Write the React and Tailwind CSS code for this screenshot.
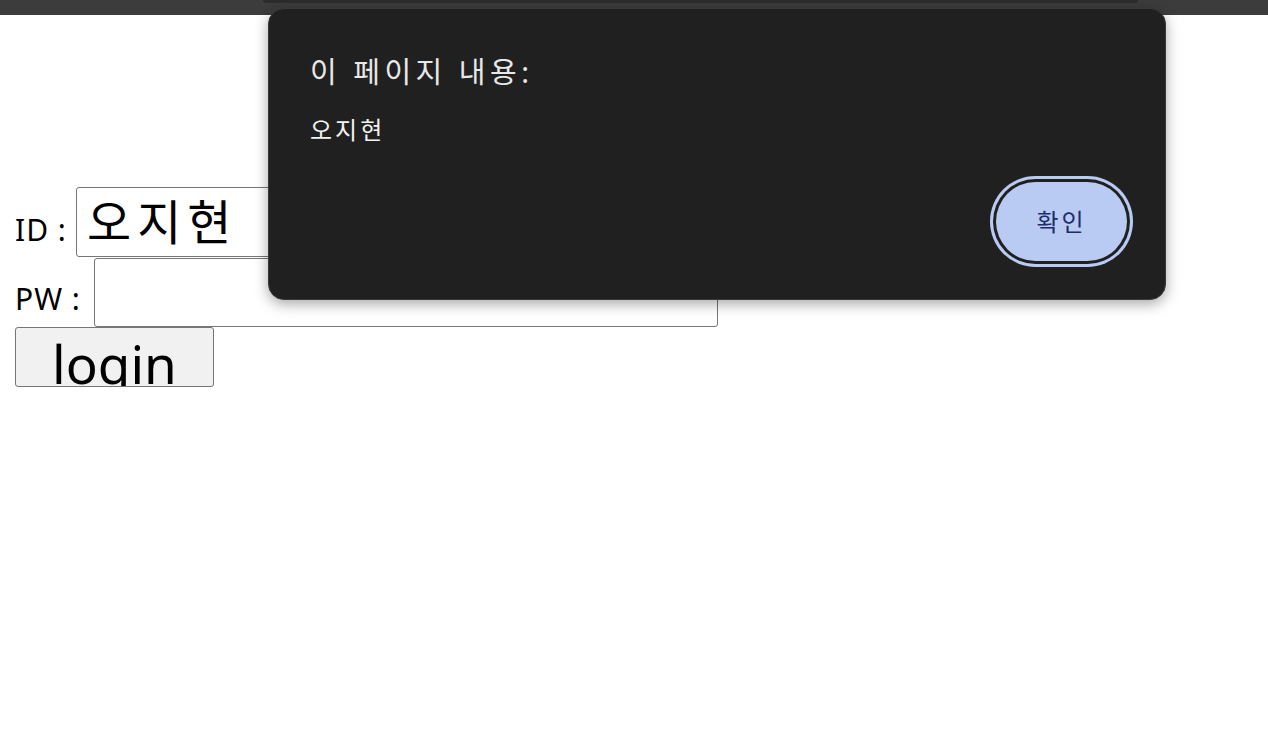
import React from 'react';

const font = { fontFamily: '"Noto Sans", "Noto Sans CJK KR", sans-serif' };

// 브라우저 alert 창 모양
function AlertBox() {
  return (
    <div
      className="absolute left-[268px] top-[8px] w-[898px] h-[292px] rounded-[16px] bg-[#202020] border border-[#3a3a3a] shadow-[0_4px_14px_rgba(0,0,0,0.35)] flex flex-col px-[41px]"
      style={font}
    >
      <div className="pt-[43px] text-[29px] leading-[40px] tracking-[4.5px] text-[#e8e8e8]">이 페이지 내용:</div>
      <div className="pt-[21px] text-[24px] leading-[34px] tracking-[3px] text-[#f2f2f2]">오지현</div>
      <div className="flex justify-end mt-auto pb-[38px]">
        <button className="w-[131px] h-[79px] rounded-full bg-[#b9cbf2] text-[#1f2c6a] text-[24px] tracking-[3px] shadow-[0_0_0_3px_#202020,0_0_0_6px_#b9cbf2] mr-[-3px]">
          확인
        </button>
      </div>
    </div>
  );
}

export default function App() {
  return (
    <div className="relative w-[1268px] h-[754px] bg-white overflow-hidden" style={font}>
      <div className="h-[15px] bg-[#3c3c3c]">
        <div className="w-[875px] h-[3px] bg-[#2c2c2c] rounded-b-[4px] ml-[263px]" />
      </div>

      <div className="pl-[15px] pt-[172px] flex flex-col items-start">
        <div className="flex items-start">
          <span className="w-[61px] text-[30px] leading-none pt-[28px] tracking-[1px] text-black">ID :</span>
          <div className="w-[624px] h-[70px] border border-[#767676] rounded-[3px] flex items-center pl-[10px] text-[48px] tracking-[6px] text-black">
            오지현
          </div>
        </div>
        <div className="flex items-start mt-[1px]">
          <span className="w-[79px] text-[30px] leading-none pt-[26px] tracking-[1px] text-black">PW :</span>
          <div className="w-[624px] h-[69px] border border-[#767676] rounded-[3px]" />
        </div>
        <button className="w-[199px] h-[60px] border border-[#767676] rounded-[3px] bg-[#f1f1f1] overflow-hidden flex justify-center items-start">
          <span className="text-[53px] leading-none mt-[9px] text-black">login</span>
        </button>
      </div>

      <AlertBox />
    </div>
  );
}
